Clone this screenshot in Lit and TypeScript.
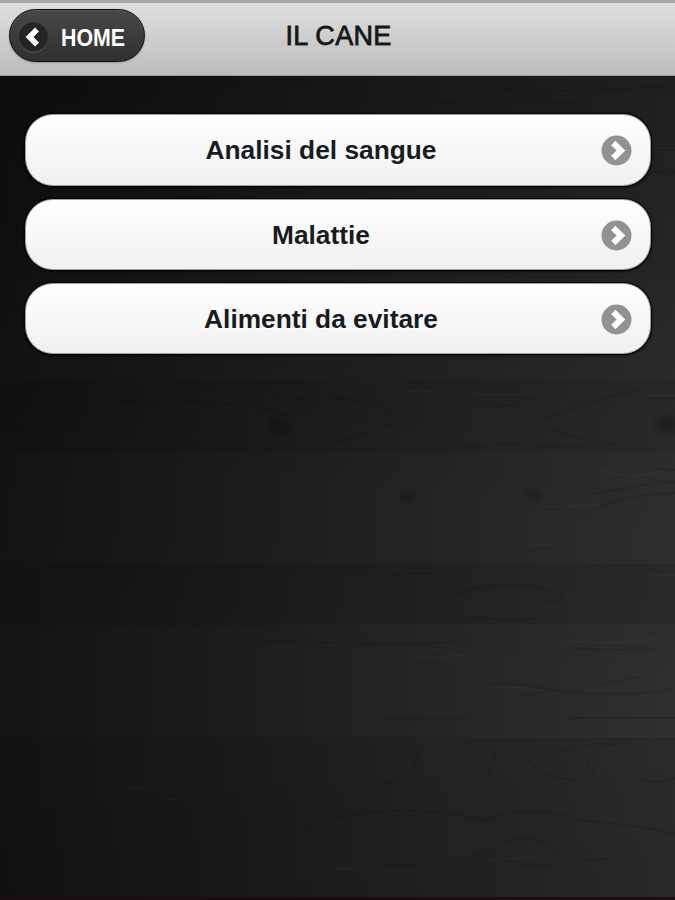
import { LitElement, html, svg, css } from "lit";
import { customElement, property } from "lit/decorators.js";

const BOARDS = [
  { y: 76, h: 70, shade: 0.05 },
  { y: 146, h: 131, shade: 0.03 },
  { y: 277, h: 103, shade: 0 },
  { y: 380, h: 71, shade: 0.05 },
  { y: 451, h: 113, shade: 0 },
  { y: 564, h: 61, shade: 0.09 },
  { y: 625, h: 113, shade: -0.004 },
  { y: 738, h: 159, shade: 0.08 },
];

const DARK_GRAIN = [
  "M272 398q18 3 38-1M120 402q60-4 110 2t58 12",
  "M100 449q50 3 110-2M320 447q50-16 80-24q-10-20-70-26",
  "M545 418q50-20 100-29M540 424q40 18 80 21M470 402q30 8 62 0M643 398h32",
  "M430 449q40 0 75-6q40 6 90 3",
  "M590 494q30-4 60-10M600 506q30-12 75-13M650 466q12 5 25 4M655 480q10 4 20 2",
  "M390 574q30-2 45 0M450 596q60-22 110-2q10 8-18 8M470 616q40 6 70 2",
  "M250 640q120 6 210 2M380 718q60 4 90-1M400 655h40M570 718h105M575 648q50 4 80 0",
  "M490 684q30-2 60 6q70 8 120 0M600 685q30-8 44-8",
  "M415 750q10 28-45 36M495 750q0 28-20 32M525 750q8 28 50 30M560 748q-8 18 12 24M600 748q-20 12-5 26M535 765q40-24 80-20",
  "M305 828q80-30 180-8q50-18 90 0q60 4 100 14M440 868q20-10 50-18q35-24 65 0q30 14 55 8",
  "M385 865h30M470 866h25M520 865h30M640 780q20 4 35-2",
  "M480 85q60 12 195 0M410 105q100-8 180 0M655 150h20M655 172q12 2 20 0",
];

const LIGHT_GRAIN = [
  "M470 393q30 4 70 0M405 391h28M648 396h27",
  "M530 545h25M600 470q30 10 60 2M540 506q30 2 60-2",
  "M288 625.500H675M405 655q30 3 60 0",
  "M495 687q30 0 50 4M565 641q50 4 90-2M125 788h20M165 799h16",
  "M335 869h20M490 860q30-3 50-2M650 575h25",
];

@customElement("wood-backdrop")
class WoodBackdrop extends LitElement {
  static styles = css`
    :host { display: block; }
    .wood { display: block; width: 100%; height: 100%; }
    .dark { fill: none; stroke: #000; stroke-opacity: 0.1; stroke-width: 1.8; }
    .light { fill: none; stroke: #fff; stroke-opacity: 0.03; stroke-width: 1.4; }
    .seam { fill: #000; fill-opacity: 0.05; }
    .knot { fill: #000; fill-opacity: 0.2; }
  `;
  render() {
    return html`<svg class="wood" viewBox="0 76 675 824" preserveAspectRatio="none" aria-hidden="true">
      <defs>
        <linearGradient id="base" x1="0" x2="1" y1="0" y2="0">
          <stop offset="0" stop-color="#131313" />
          <stop offset="0.3" stop-color="#1b1b1b" />
          <stop offset="0.65" stop-color="#252525" />
          <stop offset="1" stop-color="#2f2f2f" />
        </linearGradient>
        <linearGradient id="top" x1="0" x2="0" y1="0" y2="1">
          <stop offset="0" stop-color="#000" stop-opacity="0.3" />
          <stop offset="0.5" stop-color="#000" stop-opacity="0.04" />
          <stop offset="0.8" stop-color="#000" stop-opacity="0" />
          <stop offset="1" stop-color="#000" stop-opacity="0.06" />
        </linearGradient>
        <filter id="soft" x="-50%" y="-50%" width="200%" height="200%"><feGaussianBlur stdDeviation="3" /></filter>
      </defs>
      <rect y="76" width="675" height="824" fill="url(#base)" />
      ${BOARDS.map((b) => svg`<rect y=${b.y} width="675" height=${b.h}
          fill=${b.shade < 0 ? "#fff" : "#000"} fill-opacity=${Math.abs(b.shade)} />
        <rect class="seam" y=${b.y} width="675" height="1" />`)}
      <path class="dark" d=${DARK_GRAIN.join("")} />
      <path class="light" d=${LIGHT_GRAIN.join("")} />
      <g filter="url(#soft)">
        <ellipse class="knot" cx="278" cy="426" rx="12" ry="9" />
        <ellipse class="knot" cx="667" cy="424" rx="13" ry="9" />
        <ellipse class="knot" cx="8" cy="426" rx="12" ry="5" />
        <ellipse class="knot" cx="408" cy="497" rx="9" ry="5" />
        <ellipse class="knot" cx="533" cy="496" rx="9" ry="5" />
      </g>
      <rect y="76" width="675" height="824" fill="url(#top)" />
      <rect y="897" width="675" height="3" fill="#180d11" />
    </svg>`;
  }
}

@customElement("list-button")
class ListButton extends LitElement {
  @property() label = "";
  static styles = css`
    :host { display: block; height: 100%; }
    .btn {
      box-sizing: border-box; width: 100%; height: 100%; padding: 0 18px 0 0;
      display: grid; grid-template-columns: 1fr 31px; align-items: center;
      border: 1px solid #a0a0a0; border-radius: 28px;
      background: linear-gradient(#fff, #f0f0f0);
      box-shadow: 0 0 1px 1px #050505, 0 1px 3px #000;
      font: bold 26.3px/30px "Liberation Sans", Arial, sans-serif;
      color: #171b22; text-shadow: 0 1px 0 #fff; cursor: pointer;
    }
    .label { text-align: center; padding-left: 15px; }
    .icon { display: block; width: 31px; height: 31px; margin-top: 1px; }
  `;
  render() {
    return html`<button class="btn">
      <span class="label">${this.label}</span>
      <svg class="icon" viewBox="0 0 31 31" aria-hidden="true">
        <circle cx="15.5" cy="15.5" r="15" fill="#929292" />
        <path d="M12.300 8L20 15.500L12.300 23" fill="none" stroke="#fff" stroke-width="6" />
      </svg>
    </button>`;
  }
}

@customElement("app-root")
class AppRoot extends LitElement {
  static styles = css`
    :host {
      display: grid; grid-template-rows: 76px 1fr; height: 900px; overflow: hidden;
      font-family: "Liberation Sans", Arial, sans-serif; background: #151515;
    }
    .bar {
      box-sizing: border-box; display: grid; grid-template-columns: 145px 1fr 145px;
      padding: 5px 0 0 0; border-top: 3px solid #a6a6a6; border-bottom: 1px solid #999;
      background: linear-gradient(#dedede, #bdbdbd);
    }
    .home {
      box-sizing: border-box; width: 136px; height: 53px; margin: 1px 0 0 9px; padding: 0 0 0 8px;
      display: flex; align-items: center; gap: 12px;
      border: 1.5px solid #0d0d0d; border-radius: 27px;
      background: linear-gradient(#484848, #303030);
      box-shadow: inset 0 1px 0 #555, 0 1px 2px #999; color: #fff; cursor: pointer;
    }
    .back { flex: none; width: 31px; height: 31px; display: block; margin-top: 3px; }
    .word { display: block; width: 64px; height: 28px; margin-top: 2px; overflow: visible; }
    .word text { font: bold 24px "Liberation Sans", Arial, sans-serif; fill: #fff; }
    .title {
      margin: 13px 0 0 2px; text-align: center; font-size: 27px; line-height: 31px; font-weight: normal;
      letter-spacing: 0.3px;
      color: #161616; -webkit-text-stroke: 0.8px #161616; text-shadow: 0 1px 0 #eee;
    }
    .page { display: grid; min-height: 0; }
    .wood, .content { grid-area: 1 / 1; min-height: 0; }
    .content { z-index: 1; padding: 38px 24px 0 25px; display: grid; grid-template-rows: 72px 71px 71px; gap: 13px; align-content: start; }
  `;
  render() {
    return html`
      <header class="bar">
        <button class="home">
          <svg class="back" viewBox="0 0 31 31" aria-hidden="true">
            <circle cx="15.5" cy="16.2" r="14.5" fill="#505050" />
            <circle cx="15.5" cy="15" r="14.5" fill="#242424" />
            <path d="M19 7.500L11.500 15L19 22.500" fill="none" stroke="#fff" stroke-width="5.500" />
          </svg>
          <svg class="word" viewBox="0 0 64 28"><text x="0" y="22.5" textLength="64" lengthAdjust="spacingAndGlyphs">HOME</text></svg>
        </button>
        <h1 class="title">IL CANE</h1>
      </header>
      <main class="page">
        <wood-backdrop class="wood"></wood-backdrop>
        <nav class="content">
          ${["Analisi del sangue", "Malattie", "Alimenti da evitare"].map(
            (t) => html`<list-button .label=${t}></list-button>`
          )}
        </nav>
      </main>`;
  }
}
